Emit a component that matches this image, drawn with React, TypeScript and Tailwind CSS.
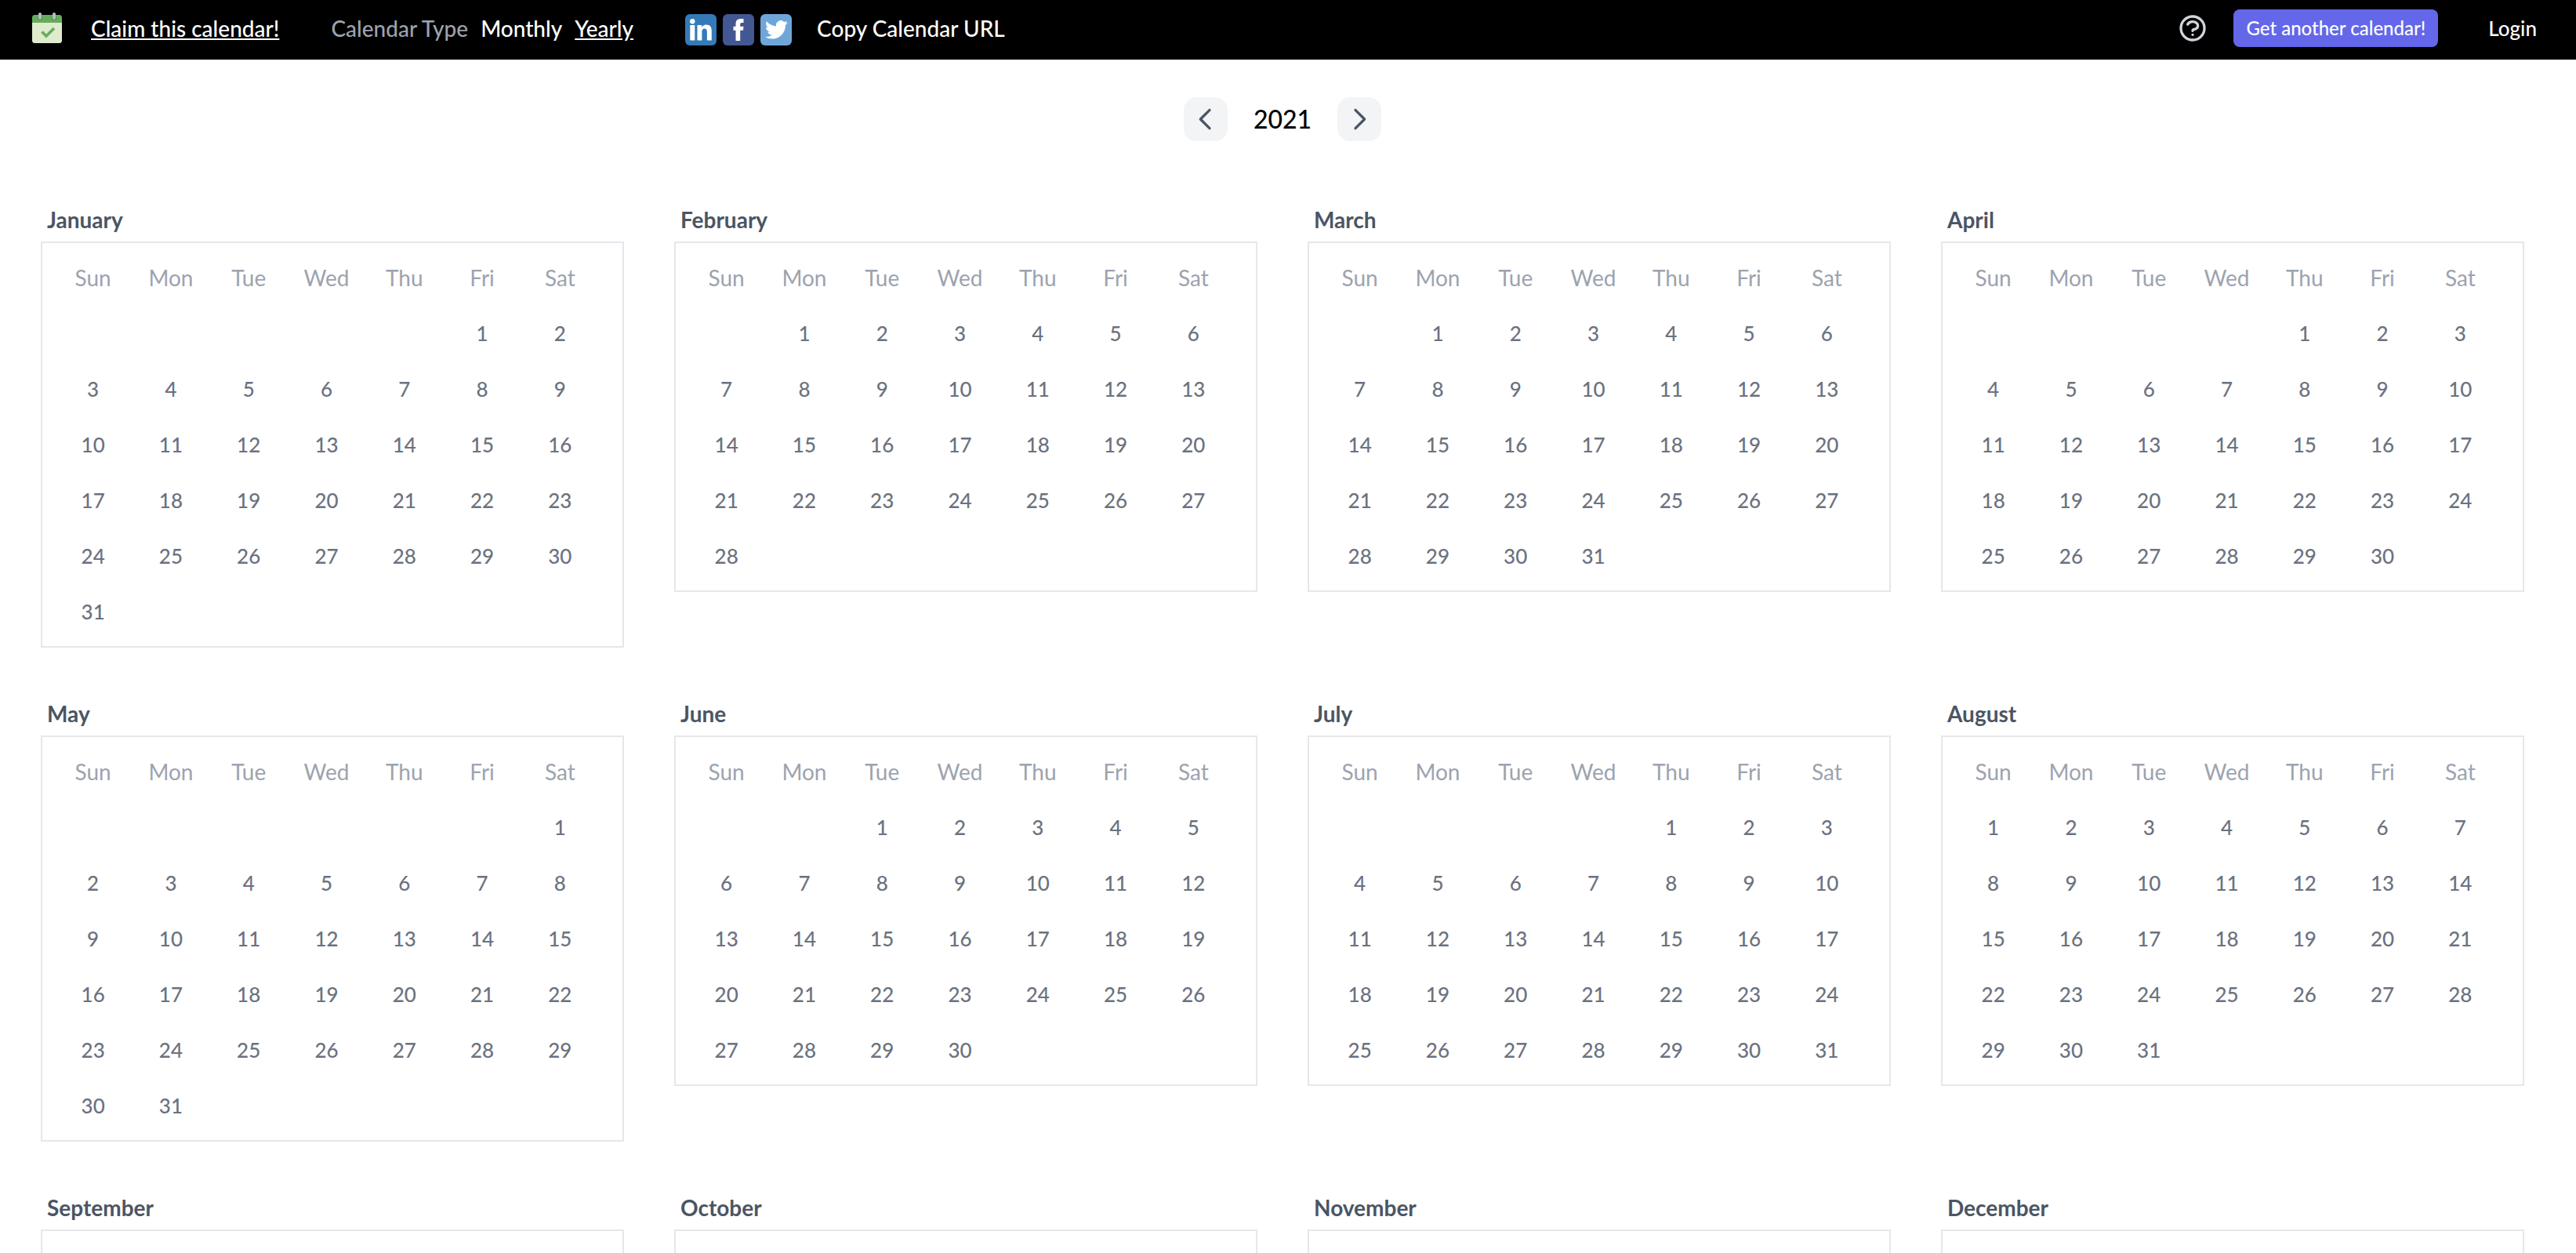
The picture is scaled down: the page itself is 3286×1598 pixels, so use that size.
const WEEKDAYS = ["Sun", "Mon", "Tue", "Wed", "Thu", "Fri", "Sat"];

const MONTHS = [
  "January",
  "February",
  "March",
  "April",
  "May",
  "June",
  "July",
  "August",
  "September",
  "October",
  "November",
  "December",
];

const getWeeks = (year: number, month: number) => {
  const offset = new Date(year, month, 1).getDay();
  const total = new Date(year, month + 1, 0).getDate();
  const rows = Math.ceil((offset + total) / 7);

  return Array.from({ length: rows }, (_, row) =>
    Array.from({ length: 7 }, (_, col) => {
      const day = row * 7 + col - offset + 1;
      return day > 0 && day <= total ? day : null;
    })
  );
};

const Logo = () => (
  <svg className="w-10 h-10" viewBox="0 0 40 40" aria-hidden="true">
    <path d="M1 12h38v23.500a3.500 3.500 0 0 1-3.500 3.500h-31A3.500 3.500 0 0 1 1 35.500z" fill="#dfebcd" />
    <path d="M1 13V6.500A3.500 3.500 0 0 1 4.500 3h31A3.500 3.500 0 0 1 39 6.500V13z" fill="#66ad5b" />
    <circle cx="11" cy="7" r="3" fill="#4d8a45" />
    <circle cx="29" cy="7" r="3" fill="#4d8a45" />
    <rect x="9" y="0" width="4" height="9" rx="2" fill="#b0bec5" />
    <rect x="27" y="0" width="4" height="9" rx="2" fill="#b0bec5" />
    <path d="M13.500 24.500l5.500 5.500L29 20" fill="none" stroke="#66ad5b" strokeWidth="3.600" />
  </svg>
);

const LinkedInIcon = () => (
  <svg className="w-10 h-10" viewBox="0 0 40 40" aria-hidden="true">
    <rect width="40" height="40" rx="6" fill="#357ab7" />
    <g fill="#fff">
      <circle cx="9.300" cy="9.300" r="3.200" />
      <path d="M6.300 14h6V33.500h-6zM15.500 14h5.600v2.700c.9-1.700 3-3.200 5.900-3.200 5.700 0 6.800 3.700 6.800 8.700V33.500h-5.900v-9.700c0-2.400-.2-5.200-3.200-5.200s-3.300 2.400-3.300 5V33.500h-5.900z" />
    </g>
  </svg>
);

const FacebookIcon = () => (
  <svg className="w-10 h-10" viewBox="0 0 40 40" aria-hidden="true">
    <rect width="40" height="40" rx="6" fill="#435793" />
    <path
      d="M16.500 34V20.700H13.500v-5h3v-3.200c0-4.400 2.200-6.500 6.300-6.500h3.700v5h-2.300c-1.700 0-2 .8-2 2v2.700h4.300l-.5 5h-3.800V34z"
      fill="#fff"
    />
  </svg>
);

const TwitterIcon = () => (
  <svg className="w-10 h-10" viewBox="0 0 40 40" aria-hidden="true">
    <rect width="40" height="40" rx="6" fill="#6fa6da" />
    <path
      transform="translate(6 5.500) scale(1.200)"
      d="M23.953 4.570a10 10 0 01-2.825.775 4.958 4.958 0 002.163-2.723c-.951.555-2.005.959-3.127 1.184a4.920 4.920 0 00-8.384 4.482C7.690 8.095 4.067 6.130 1.640 3.162a4.822 4.822 0 00-.666 2.475c0 1.710.870 3.213 2.188 4.096a4.904 4.904 0 01-2.228-.616v.060a4.923 4.923 0 003.946 4.827 4.996 4.996 0 01-2.212.085 4.936 4.936 0 004.604 3.417 9.867 9.867 0 01-6.102 2.105c-.390 0-.779-.023-1.170-.067a13.995 13.995 0 007.557 2.209c9.053 0 13.998-7.496 13.998-13.985 0-.210 0-.420-.015-.630A9.935 9.935 0 0024 4.590z"
      fill="#fff"
    />
  </svg>
);

const Header = () => (
  <header className="flex items-center justify-between h-[76px] pb-1 pl-10 pr-[50px] bg-black text-white text-[28px] leading-9 font-medium">
    <div className="flex items-center">
      <a href="#" aria-label="Home">
        <Logo />
      </a>
      <a href="#claim" className="ml-9 underline">
        Claim this calendar!
      </a>
      <nav className="flex items-center gap-4 ml-[66px]" aria-label="Calendar Type">
        <span className="text-[#9ca3af]">Calendar Type</span>
        <a href="#monthly">Monthly</a>
        <a href="#yearly" className="underline">
          Yearly
        </a>
      </nav>
      <div className="flex items-center gap-2 ml-[66px] pt-1">
        <a href="#linkedin" aria-label="Share on LinkedIn">
          <LinkedInIcon />
        </a>
        <a href="#facebook" aria-label="Share on Facebook">
          <FacebookIcon />
        </a>
        <a href="#twitter" aria-label="Share on Twitter">
          <TwitterIcon />
        </a>
      </div>
      <button type="button" className="ml-8">
        Copy Calendar URL
      </button>
    </div>
    <div className="flex items-center">
      <button type="button" aria-label="Help" className="text-[#d1d5db]">
        <svg className="w-10 h-10" viewBox="0 0 24 24" fill="none" stroke="currentColor" strokeWidth="2" strokeLinecap="round" strokeLinejoin="round">
          <path d="M8.228 9c.549-1.165 2.030-2 3.772-2 2.210 0 4 1.343 4 3 0 1.400-1.278 2.575-3.006 2.907-.542.104-.994.540-.994 1.093m0 3h.010M21 12a9 9 0 11-18 0 9 9 0 0118 0z" />
        </svg>
      </button>
      <button type="button" className="h-12 px-4 ml-8 rounded-lg bg-[#6467e9] text-2xl">
        Get another calendar!
      </button>
      <a href="#login" className="ml-16 text-[26px]">
        Login
      </a>
    </div>
  </header>
);

const YearButton = ({ label, path }: { label: string; path: string }) => (
  <button
    type="button"
    aria-label={label}
    className="flex items-center justify-center w-14 h-14 rounded-2xl bg-[#f3f4f6] text-[#4b5563]"
  >
    <svg className="w-10 h-10" viewBox="0 0 24 24" fill="none" stroke="currentColor" strokeWidth="2" strokeLinecap="round" strokeLinejoin="round">
      <path d={path} />
    </svg>
  </button>
);

const Month = ({ year, month }: { year: number; month: number }) => (
  <section>
    <h2 id={`month-${month}`} className="mb-2 pl-2 text-[28px] leading-10 font-bold text-[#4b5563]">
      {MONTHS[month]}
    </h2>
    <div className="border-2 border-[#e5e7eb] pt-2 pb-[9px] pl-[15px] pr-[30px]">
      <table className="w-full table-fixed text-center" aria-labelledby={`month-${month}`}>
        <thead>
          <tr className="h-[71px] text-[28px] leading-9 text-[#9ca3af]">
            {WEEKDAYS.map((weekday) => (
              <th key={weekday} scope="col" className="p-0 font-normal">
                {weekday}
              </th>
            ))}
          </tr>
        </thead>
        <tbody className="text-[26px] leading-9 font-medium text-[#6b7280]">
          {getWeeks(year, month).map((week, row) => (
            <tr key={row} className="h-[71px]">
              {week.map((day, col) => (
                <td key={col} className="p-0">
                  {day}
                </td>
              ))}
            </tr>
          ))}
        </tbody>
      </table>
    </div>
  </section>
);

const App = () => {
  const year = 2021;

  return (
    <div className="font-[Lato,sans-serif] bg-white">
      <Header />
      <main className="pl-[52px] pr-[66px] pt-12 pb-16">
        <div className="flex items-center justify-center gap-[33px]">
          <YearButton label="Previous year" path="M15 19l-7-7 7-7" />
          <h1 className="text-[32px] leading-10 font-medium text-black">{year}</h1>
          <YearButton label="Next year" path="M9 5l7 7-7 7" />
        </div>
        <div className="grid grid-cols-4 items-start gap-16 mt-20">
          {MONTHS.map((name, month) => (
            <Month key={name} year={year} month={month} />
          ))}
        </div>
      </main>
    </div>
  );
};

export default App;
